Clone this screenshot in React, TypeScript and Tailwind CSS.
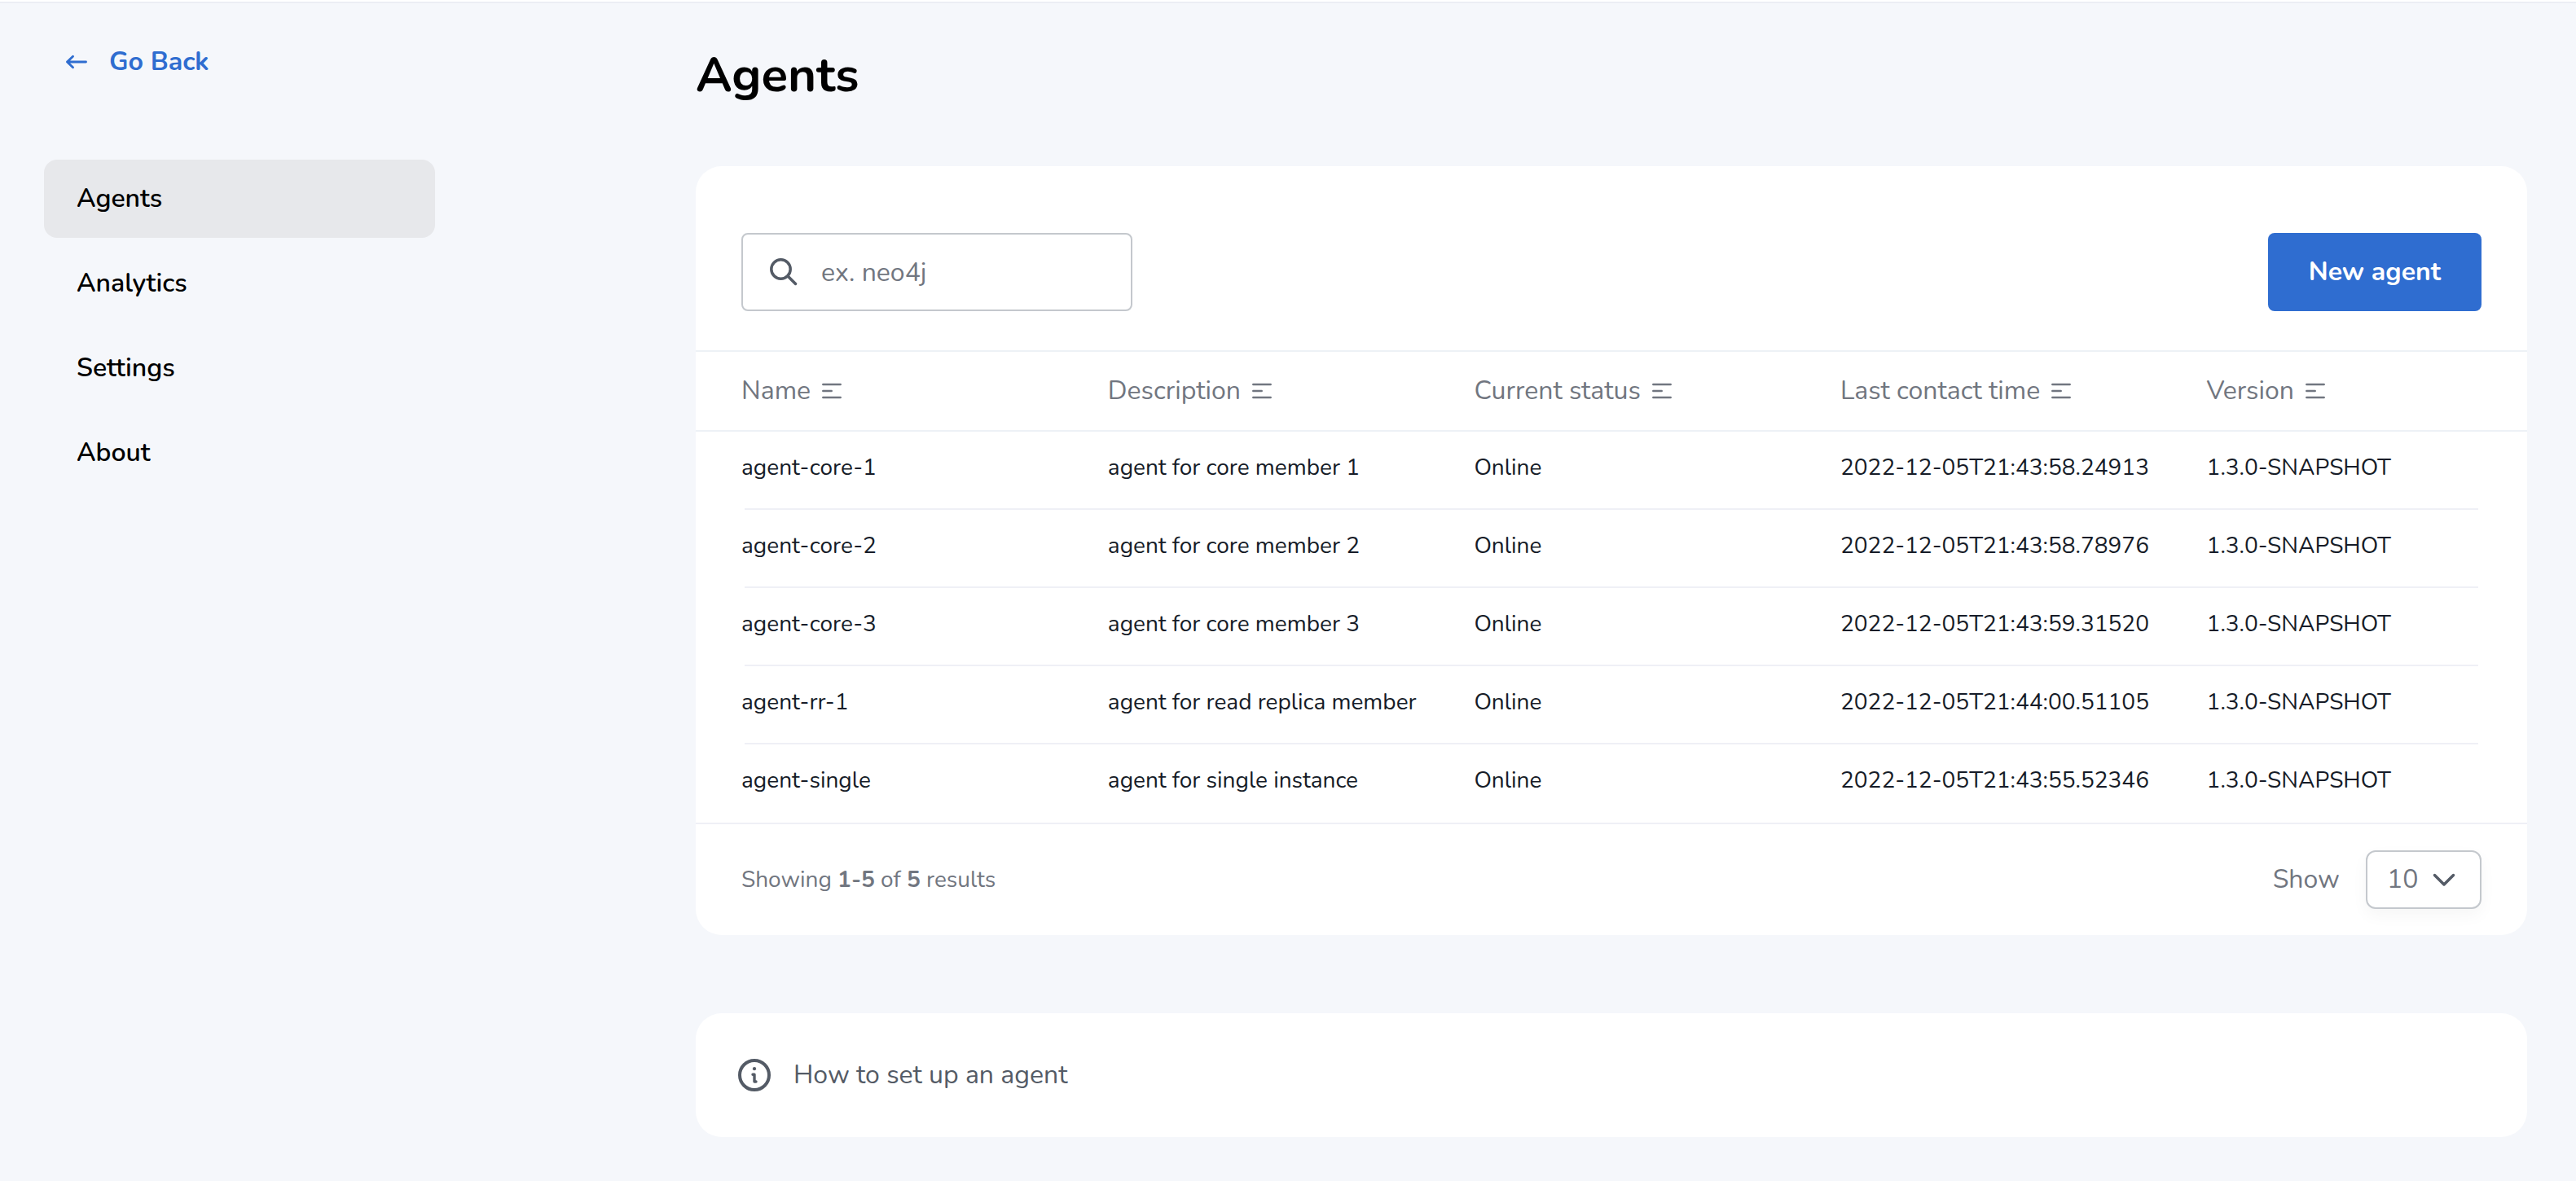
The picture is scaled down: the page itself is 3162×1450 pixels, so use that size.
type Agent = {
  name: string;
  description: string;
  status: string;
  lastContact: string;
  version: string;
};

const navItems = ["Agents", "Analytics", "Settings", "About"];

const columns = ["Name", "Description", "Current status", "Last contact time", "Version"];

const agents: Agent[] = [
  { name: "agent-core-1", description: "agent for core member 1", status: "Online", lastContact: "2022-12-05T21:43:58.24913", version: "1.3.0-SNAPSHOT" },
  { name: "agent-core-2", description: "agent for core member 2", status: "Online", lastContact: "2022-12-05T21:43:58.78976", version: "1.3.0-SNAPSHOT" },
  { name: "agent-core-3", description: "agent for core member 3", status: "Online", lastContact: "2022-12-05T21:43:59.31520", version: "1.3.0-SNAPSHOT" },
  { name: "agent-rr-1", description: "agent for read replica member", status: "Online", lastContact: "2022-12-05T21:44:00.51105", version: "1.3.0-SNAPSHOT" },
  { name: "agent-single", description: "agent for single instance", status: "Online", lastContact: "2022-12-05T21:43:55.52346", version: "1.3.0-SNAPSHOT" },
];

function ArrowLeftIcon() {
  return (
    <svg width="28" height="20" viewBox="0 0 28 20" fill="none" stroke="currentColor" strokeWidth="2.9" strokeLinecap="round" strokeLinejoin="round" aria-hidden="true">
      <path d="M25.5 10H2.5M9.5 3.2L2.5 10L9.5 16.8" />
    </svg>
  );
}

function SearchIcon() {
  return (
    <svg width="40" height="40" viewBox="0 0 40 40" fill="none" stroke="currentColor" strokeWidth="3.5" strokeLinecap="round" aria-hidden="true">
      <circle cx="16.5" cy="16.5" r="11.7" />
      <path d="M25 25L34.5 34.5" />
    </svg>
  );
}

function SortIcon() {
  return (
    <svg width="24" height="20" viewBox="0 0 24 20" fill="none" stroke="currentColor" strokeWidth="2.7" strokeLinecap="round" aria-hidden="true">
      <path d="M1.4 2H22.6M1.4 10H11.6M1.4 18H22.6" />
    </svg>
  );
}

function ChevronDownIcon() {
  return (
    <svg width="28" height="20" viewBox="0 0 28 20" fill="none" stroke="currentColor" strokeWidth="3.5" strokeLinecap="round" strokeLinejoin="round" aria-hidden="true">
      <path d="M2.5 4.5L14 16L25.5 4.5" />
    </svg>
  );
}

function InfoIcon() {
  return (
    <svg width="40" height="40" viewBox="0 0 40 40" fill="none" aria-hidden="true">
      <circle cx="20" cy="20" r="18" stroke="currentColor" strokeWidth="4" />
      <circle cx="20" cy="12.2" r="2.1" fill="currentColor" />
      <path d="M18 19.2H20V28H22" stroke="currentColor" strokeWidth="3.4" strokeLinecap="round" strokeLinejoin="round" />
    </svg>
  );
}

function Sidebar() {
  return (
    <aside className="w-[534px] shrink-0 pt-12 pl-[54px]">
      <a href="#back" className="ml-[26px] flex h-12 w-fit items-center gap-[26px] text-[32px] leading-10 font-bold text-[#2f6dd0]">
        <ArrowLeftIcon />
        Go Back
      </a>
      <nav className="mt-24 flex flex-col gap-2">
        {navItems.map((item, i) => (
          <a
            key={item}
            href={`#${item.toLowerCase()}`}
            aria-current={i === 0 ? "page" : undefined}
            className="flex h-24 items-center rounded-2xl pl-10 text-[32px] leading-10 font-semibold text-black aria-[current=page]:bg-[#e7e8eb]"
          >
            {item}
          </a>
        ))}
      </nav>
    </aside>
  );
}

function AgentsTable() {
  return (
    <table className="w-full table-fixed border-separate border-spacing-0 text-left">
      <thead>
        <tr className="text-[32px] leading-10 text-[#717680]">
          {columns.map((column) => (
            <th key={column} scope="col" className="h-[100px] w-[20%] border-y-2 border-[#edf1f6] p-0 font-normal first:w-[22.5%] first:pl-14 last:w-[17.5%]">
              <button type="button" className="flex items-center gap-3.5 whitespace-nowrap">
                {column}
                <SortIcon />
              </button>
            </th>
          ))}
        </tr>
      </thead>
      <tbody>
        {agents.map((agent) => (
          <tr key={agent.name} className="group text-[28px] leading-10 whitespace-nowrap text-[#161c28]">
            {[agent.name, agent.description, agent.status, agent.lastContact, agent.version].map((value, i) => (
              <td
                key={columns[i]}
                className="relative h-24 p-0 pb-2 group-last:after:hidden after:absolute after:inset-x-0 after:bottom-0 after:h-0.5 after:bg-[#eff0f6] first:pl-14 first:after:left-[60px] last:after:right-[60px]"
              >
                {value}
              </td>
            ))}
          </tr>
        ))}
      </tbody>
    </table>
  );
}

export default function App() {
  return (
    <div className="min-h-screen border-t-2 border-white bg-[#f5f7fb] font-['Nunito','Noto_Sans',sans-serif]">
      <div className="flex border-t-2 border-[#eceef4]">
        <Sidebar />
        <main className="ml-80 min-w-0 flex-1 pt-[52px] pr-[60px] pb-[54px]">
          <h1 className="text-[60px] leading-[72px] font-bold text-black">Agents</h1>

          <section className="mt-[76px] rounded-[32px] bg-white">
            <div className="flex items-center justify-between px-14 pt-[82px] pb-12">
              <div className="relative w-[480px] text-[#545b66]">
                <span className="pointer-events-none absolute inset-y-0 left-8 flex items-center">
                  <SearchIcon />
                </span>
                <input
                  type="search"
                  aria-label="Search agents"
                  placeholder="ex. neo4j"
                  className="h-24 w-full rounded-lg border-2 border-[#c4c8cd] bg-white pl-24 text-[32px] leading-10 placeholder:text-[#717680]"
                />
              </div>
              <button type="button" className="h-24 rounded-lg bg-[#2f6dd0] px-[50px] text-[32px] leading-10 font-bold text-white">
                New agent
              </button>
            </div>

            <AgentsTable />

            <div className="flex items-center justify-between border-t-2 border-[#eff0f6] px-14 py-8 text-[#717680]">
              <p className="text-[28px] leading-10">
                Showing <b>1-5</b> of <b>5</b> results
              </p>
              <div className="flex items-center gap-8 text-[32px] leading-10">
                <label htmlFor="page-size">Show</label>
                <div className="relative">
                  <select
                    id="page-size"
                    defaultValue="10"
                    className="h-[72px] w-[142px] appearance-none rounded-xl border-2 border-[#c4c8cd] bg-white pl-6 shadow-[0_8px_20px_rgba(0,0,0,0.04)]"
                  >
                    <option>10</option>
                    <option>25</option>
                    <option>50</option>
                  </select>
                  <span className="pointer-events-none absolute inset-y-0 right-8 flex items-center text-[#545b66]">
                    <ChevronDownIcon />
                  </span>
                </div>
              </div>
            </div>
          </section>

          <section className="mt-24 rounded-[32px] bg-white">
            <button type="button" className="flex h-[152px] w-full items-center gap-7 px-[52px] text-[32px] leading-10 text-[#545b66]">
              <InfoIcon />
              How to set up an agent
            </button>
          </section>
        </main>
      </div>
    </div>
  );
}
